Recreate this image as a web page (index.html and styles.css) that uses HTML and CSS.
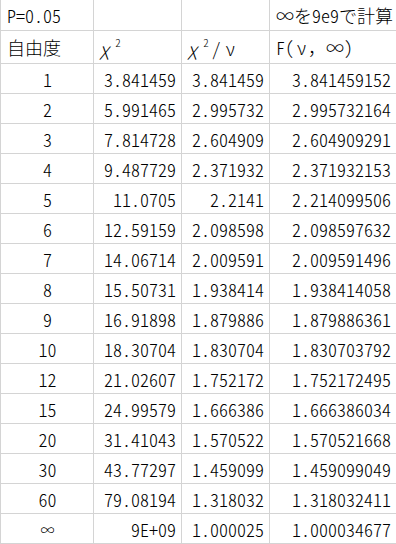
FILE: index.html
```html
<!DOCTYPE html>
<html lang="ja">
<head>
<meta charset="utf-8">
<link rel="stylesheet" href="styles.css">
</head>
<body>
<table class="sheet">
  <colgroup>
    <col class="c1"><col class="c2"><col class="c3"><col class="c4">
  </colgroup>
  <tr class="r-top">
    <td class="txt">P=0.05</td><td></td><td></td><td class="txt note"><span class="fw">∞</span>を9e9で計算</td>
  </tr>
  <tr class="r-head">
    <td class="txt">自由度</td>
    <td class="txt hd"><span class="chi">χ</span><sup>2</sup></td>
    <td class="txt hd"><span class="chi">χ</span><sup class="sup-s">2</sup>/<span class="nu">ν</span></td>
    <td class="txt">F(<span class="nu2">ν</span><span class="fw">，∞</span>)</td>
  </tr>
  <tr><td class="df">1</td><td class="num">3.841459</td><td class="num">3.841459</td><td class="num">3.841459152</td></tr>
  <tr><td class="df">2</td><td class="num">5.991465</td><td class="num">2.995732</td><td class="num">2.995732164</td></tr>
  <tr><td class="df">3</td><td class="num">7.814728</td><td class="num">2.604909</td><td class="num">2.604909291</td></tr>
  <tr><td class="df">4</td><td class="num">9.487729</td><td class="num">2.371932</td><td class="num">2.371932153</td></tr>
  <tr><td class="df">5</td><td class="num">11.0705</td><td class="num">2.2141</td><td class="num">2.214099506</td></tr>
  <tr><td class="df">6</td><td class="num">12.59159</td><td class="num">2.098598</td><td class="num">2.098597632</td></tr>
  <tr><td class="df">7</td><td class="num">14.06714</td><td class="num">2.009591</td><td class="num">2.009591496</td></tr>
  <tr><td class="df">8</td><td class="num">15.50731</td><td class="num">1.938414</td><td class="num">1.938414058</td></tr>
  <tr><td class="df">9</td><td class="num">16.91898</td><td class="num">1.879886</td><td class="num">1.879886361</td></tr>
  <tr><td class="df">10</td><td class="num">18.30704</td><td class="num">1.830704</td><td class="num">1.830703792</td></tr>
  <tr><td class="df">12</td><td class="num">21.02607</td><td class="num">1.752172</td><td class="num">1.752172495</td></tr>
  <tr><td class="df">15</td><td class="num">24.99579</td><td class="num">1.666386</td><td class="num">1.666386034</td></tr>
  <tr><td class="df">20</td><td class="num">31.41043</td><td class="num">1.570522</td><td class="num">1.570521668</td></tr>
  <tr><td class="df">30</td><td class="num">43.77297</td><td class="num">1.459099</td><td class="num">1.459099049</td></tr>
  <tr><td class="df">60</td><td class="num">79.08194</td><td class="num">1.318032</td><td class="num">1.318032411</td></tr>
  <tr><td class="df inf">∞</td><td class="num">9E+09</td><td class="num">1.000025</td><td class="num">1.000034677</td></tr>
</table>
</body>
</html>
```

FILE: styles.css
```css
html, body {
  margin: 0;
  padding: 0;
  background: #ffffff;
}

.sheet {
  border-collapse: separate;
  border-spacing: 0;
  table-layout: fixed;
  width: 396px;
  font-family: "Noto Sans CJK JP", "Noto Sans", sans-serif;
  font-weight: 300;
  font-size: 18px;
  font-feature-settings: "hwid";
  color: #000000;
}

.c1 { width: 94px; }
.c2 { width: 88px; }
.c3 { width: 88px; }
.c4 { width: 126px; }

.sheet td {
  box-sizing: border-box;
  border-right: 1px solid #d4d4d4;
  border-bottom: 1px solid #d4d4d4;
  padding: 0 5px 0 6px;
  white-space: nowrap;
  overflow: visible;
  line-height: 1;
  vertical-align: middle;
}

.sheet td:first-child {
  border-left: 1px solid #d4d4d4;
}

.sheet td:last-child {
  border-right: none;
}

.sheet tr { height: 30px; }
.sheet tr.r-top { height: 31px; }
.sheet tr.r-head { height: 33px; }

.txt { text-align: left; }
.note { padding-left: 5px; }
.hd { padding-left: 7px; }

.num { text-align: right; }
.df { text-align: center; padding: 0; }
.inf { font-size: 14px; }

.fw { font-feature-settings: "fwid"; }

.chi {
  font-style: italic;
  margin-right: 6px;
}

.sheet sup {
  font-size: 11px;
  vertical-align: 9px;
}

.sup-s { margin-right: 3px; }

.nu { margin-left: 5px; }
.nu2 { margin-left: 3px; margin-right: 2px; }
```
